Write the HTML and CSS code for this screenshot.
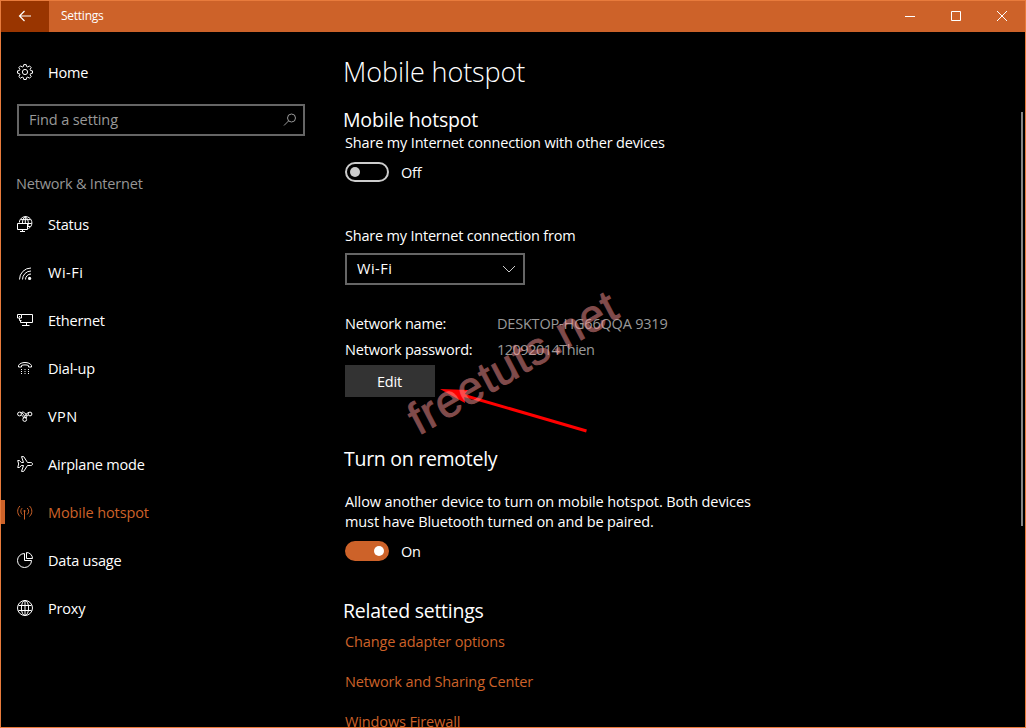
FILE: index.html
```
<!DOCTYPE html>
<html lang="en">
<head>
<meta charset="utf-8">
<title>Settings</title>
<link rel="stylesheet" href="styles.css">
</head>
<body>
<div class="window">
  <header class="titlebar">
    <button class="back" aria-label="Back"><svg width="14" height="12" viewBox="0 0 14 12"><path d="M13 6H1.500M6.500 1L1.500 6l5 5"/></svg></button>
    <span class="app-name">Settings</span>
    <div class="controls">
      <svg width="46" height="31" viewBox="0 0 46 31"><path d="M18 15.500h10"/></svg>
      <svg width="46" height="31" viewBox="0 0 46 31"><path d="M18.500 10.500h9v9h-9z"/></svg>
      <svg width="46" height="31" viewBox="0 0 46 31"><path d="M18 10l10 10M28 10L18 20"/></svg>
    </div>
  </header>
  <div class="body">
    <aside class="sidebar">
      <a class="nav-item home"><svg class="icon" viewBox="0 0 16 16"><path d="M6.800.6h2.400l.4 1.900 1.200.5 1.700-1.100 1.700 1.700-1.100 1.700.5 1.200 1.900.4v2.300l-1.900.4-.5 1.200 1.100 1.700-1.700 1.700-1.700-1.100-1.200.5-.4 1.900H6.800l-.4-1.900-1.200-.5-1.700 1.100-1.700-1.700 1.100-1.700-.5-1.200-1.900-.4V6.900l1.900-.4.5-1.200-1.100-1.700 1.700-1.700 1.700 1.100 1.200-.5z"/><circle cx="8" cy="8" r="2.600"/></svg><span>Home</span></a>
      <div class="search"><span>Find a setting</span><svg width="14" height="14" viewBox="0 0 14 14"><circle cx="8.500" cy="5" r="4"/><path d="M5.700 7.800L1 12.500"/></svg></div>
      <div class="group">Network &amp; Internet</div>
      <nav>
        <a class="nav-item"><svg class="icon" viewBox="0 0 16 16"><path d="M2.300 6.500A6.300 6.300 0 1 1 11.500 12.500M8.300.6C6.300 2 5.500 4 5.500 7M8.300.6c2.200 2 3 4 3 6.300 0 2-.3 3.500-1 4.900M3.500 3.600h10M2.500 7.500h12.200M11 10.500h2.500M8.300.5v7"/><path d="M.5 7.500h10v6H.5zM5.500 13.500v2M3 15.500h5"/></svg><span>Status</span></a>
        <a class="nav-item wifi"><svg class="icon" viewBox="0 0 16 16"><path d="M2.500 15.500A11.500 11.500 0 0 1 14 4M5.500 15.500A8.500 8.500 0 0 1 14 7M8.500 15.500A5.500 5.500 0 0 1 14 10"/><circle class="solid" cx="12.600" cy="14.400" r="1.600"/></svg><span>Wi-Fi</span></a>
        <a class="nav-item"><svg class="icon" viewBox="0 0 16 16"><path d="M4.500 2.500h11v8H3.500V8M9.500 10.500v3M5 13.500h7.500M.5 2.500h4v3.500h-4zM2.500 6v2.500h2M2 4.500h1"/></svg><span>Ethernet</span></a>
        <a class="nav-item"><svg class="icon" viewBox="0 0 16 16"><path d="M1.500 7V5.500C3.500 1.500 12.500 1.500 14.500 5.500V7h-3V5.500C10 4.700 6 4.700 4.500 5.500V7z"/><path class="dots" d="M4 9.500h9M4 11.500h9M4 13.500h9"/></svg><span>Dial-up</span></a>
        <a class="nav-item vpn"><svg class="icon" viewBox="0 0 16 16"><circle cx="2.500" cy="6" r="1.900"/><circle cx="13" cy="6" r="1.900"/><circle cx="7.700" cy="11.500" r="1.900"/><path d="M3.500 4.300c2.500 0 4 4.500 5.500 5.800M4.300 7c1 0 1.700 1.500 2.200 2.800M5 4c2 0 3.500 1 5 4M12 4.300c-2.500 0-4 4.500-5.500 5.800M11.200 7c-1 0-1.500 1.500-2 3"/></svg><span>VPN</span></a>
        <a class="nav-item"><svg class="icon" viewBox="0 0 16 16"><path d="M.7 4.500h1.800L4.300 6.500H6.500L4.500.6h2.200L10.500 6.500h3.300c2.300 0 2.300 3 0 3H10.500L6.700 15.400H4.500L6.500 9.500H4.300L2.500 11.500H.7L1.700 8z"/></svg><span>Airplane mode</span></a>
        <a class="nav-item active"><svg class="icon" viewBox="0 0 16 16"><path d="M3 2C-.1 5-.1 9.500 3 12.500M5.300 4C3.300 6 3.300 8.500 5.300 10.500M12.500 2c3.100 3 3.100 7.500 0 10.500M10.200 4c2 2 2 4.500 0 6.500M7.500 7v8.500"/><circle class="solid" cx="7.500" cy="7" r="1"/></svg><span>Mobile hotspot</span></a>
        <a class="nav-item"><svg class="icon" viewBox="0 0 16 16"><path d="M7.500 1.500A7 7 0 1 0 14.500 8.500H7.500zM9.500.5v6h6A6 6 0 0 0 9.500.5z"/></svg><span>Data usage</span></a>
        <a class="nav-item"><svg class="icon" viewBox="0 0 16 16"><circle cx="8" cy="8" r="7.500"/><ellipse cx="8" cy="8" rx="3.600" ry="7.500"/><path d="M8 .5v15M1.500 5.500h13M1.500 10.500h13"/></svg><span>Proxy</span></a>
      </nav>
    </aside>
    <main class="main">
      <h1>Mobile hotspot</h1>
      <h2>Mobile hotspot</h2>
      <p class="share">Share my Internet connection with other devices</p>
      <div class="toggle-row"><span class="toggle"></span><span class="state">Off</span></div>
      <label class="from">Share my Internet connection from</label>
      <div class="select wifi"><span>Wi-Fi</span><svg width="14" height="8" viewBox="0 0 14 8"><path d="M1 1l6 6 6-6"/></svg></div>
      <dl class="details">
        <dt>Network name:</dt><dd>DESKTOP-HG66QQA 9319</dd>
        <dt>Network password:</dt><dd class="password">12092014Thien</dd>
      </dl>
      <button class="edit">Edit</button>
      <h2 class="remote">Turn on remotely</h2>
      <p class="allow">Allow another device to turn on mobile hotspot. Both devices<br>must have Bluetooth turned on and be paired.</p>
      <div class="toggle-row"><span class="toggle on"></span><span class="state">On</span></div>
      <h2 class="related">Related settings</h2>
      <div class="links"><a>Change adapter options</a><a>Network and Sharing Center</a><a>Windows Firewall</a></div>
    </main>
    <div class="scrollbar"></div>
  </div>
  <svg class="pointer" width="150" height="48" viewBox="0 0 150 48"><path class="head" d="M-1 0L27 1 23 6 24 14z"/><path d="M20 5.500L145.500 42"/></svg>
  <div class="watermark">freetuts.net</div>
</div>
</body>
</html>
```
FILE: styles.css
```
* { box-sizing: border-box; }
body {
  margin: 0;
  background: #000;
  color: #fff;
  font: 14.5px/20px "Open Sans", "Noto Sans", sans-serif;
  letter-spacing: -0.2px;
}
h1, h2, p, dl, dd { margin: 0; font-weight: 400; }
button { border: 0; padding: 0; color: inherit; font: inherit; letter-spacing: inherit; }
svg { display: block; fill: none; stroke: currentColor; stroke-width: 1; flex: none; }

.window {
  position: relative;
  width: 1026px;
  height: 728px;
  display: flex;
  flex-direction: column;
  overflow: hidden;
  border: 1px solid #e87b3c;
}
.titlebar { display: flex; flex: none; align-items: center; height: 31px; background: #cd6229; }
.back { display: flex; align-items: center; justify-content: center; width: 48px; height: 31px; padding-bottom: 2px; background: #993500; }
.back svg { stroke-width: 1.2; }
.app-name { margin: 0 0 1px 12px; font-size: 12px; letter-spacing: -0.25px; }
.controls { display: flex; margin-left: auto; }

.body { display: flex; flex: 1; min-height: 0; }
.sidebar { width: 304px; flex: none; padding-top: 17px; }
.nav-item { display: flex; align-items: center; gap: 15px; height: 48px; padding-left: 16px; }
.icon { width: 16px; height: 16px; margin-bottom: 2px; }
.icon .solid { fill: currentColor; stroke: none; }
.icon .dots { stroke-dasharray: 1 2.500; }
.wifi span { letter-spacing: 0.5px; }
.vpn span { letter-spacing: 0.4px; }
.active { color: #cd6229; position: relative; letter-spacing: -0.1px; }
.active::before { content: ""; position: absolute; left: -1px; top: 11px; width: 5px; height: 24px; background: #cd6229; }
.search {
  display: flex;
  align-items: center;
  justify-content: space-between;
  width: 288px;
  height: 32px;
  margin: 7px 0 0 16px;
  padding: 0 6px 0 10px;
  border: 2px solid #666;
  color: #999;
  letter-spacing: -0.1px;
}
.group { margin: 38px 0 7px 15px; color: #969696; }

.main { flex: 1; display: flex; flex-direction: column; padding: 20px 0 0 40px; min-width: 0; }
.main > * { flex: none; }
h1 { font-size: 27px; font-weight: 350; line-height: 40px; letter-spacing: -0.1px; }
h2 { margin-top: 16px; font-size: 19.5px; line-height: 24px; letter-spacing: -0.18px; }
h1, h2 { margin-left: -2px; }
.share { margin-top: 1px; letter-spacing: -0.16px; }
.toggle-row { display: flex; align-items: center; gap: 12px; margin-top: 9px; height: 20px; }
.toggle { display: flex; align-items: center; width: 44px; height: 20px; padding: 0 3px; border: 2px solid #ccc; border-radius: 10px; }
.toggle::before { content: ""; width: 10px; height: 10px; border-radius: 50%; background: #ccc; }
.toggle.on { justify-content: flex-end; border-color: #cd6229; background: #cd6229; }
.toggle.on::before { background: #fff; }
.state { padding-top: 2px; }
.from { margin-top: 44px; }
.select {
  display: flex;
  align-items: center;
  justify-content: space-between;
  width: 180px;
  height: 32px;
  margin-top: 7px;
  padding: 0 7px 0 10px;
  border: 2px solid #666;
}
.select svg { color: #ccc; }
.details { display: grid; grid-template-columns: 152px auto; row-gap: 6px; margin-top: 29px; }
.details dd { color: #999; }
.details .password { letter-spacing: -0.5px; }
.edit { width: 90px; height: 32px; margin-top: 5px; padding: 2px 1px 0 0; background: #333; }
h2.remote { margin: 50px 0 21px -1px; letter-spacing: -0.28px; }
h2.related { margin-top: 38px; letter-spacing: -0.25px; }
.allow { letter-spacing: -0.11px; }
.links { display: flex; flex-direction: column; gap: 20px; margin-top: 9px; color: #cd6229; letter-spacing: -0.13px; white-space: nowrap; }
.scrollbar { flex: none; width: 2px; height: 414px; margin: 80px 2px 0 0; background: #858585; }

.pointer { position: absolute; left: 440px; top: 388px; color: #f00; stroke-width: 3; overflow: visible; }
.pointer .head { fill: #f00; stroke: none; }
.watermark {
  position: absolute;
  left: 418px;
  top: 394px;
  font: 45px/52px "Liberation Sans", sans-serif;
  letter-spacing: 0.9px;
  color: #ff9696;
  -webkit-text-stroke: 0.900px #ff9696;
  opacity: 0.5;
  transform: rotate(-30.600deg) skewX(-3deg);
  transform-origin: 0 42px;
}
```
